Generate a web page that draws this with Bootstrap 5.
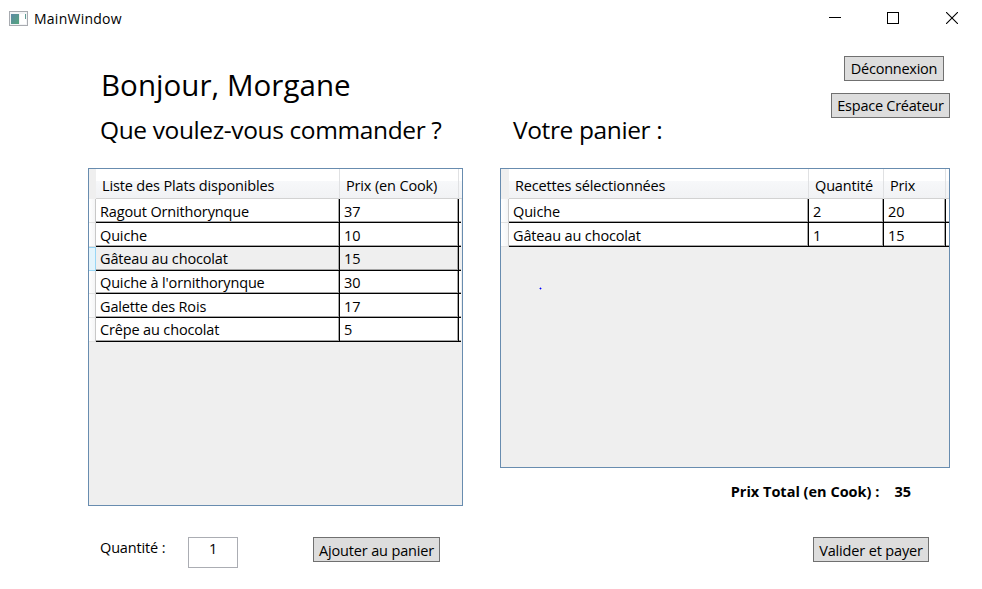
<!DOCTYPE html>
<html lang="fr">
<head>
<meta charset="utf-8">
<meta name="viewport" content="width=device-width, initial-scale=1">
<title>MainWindow</title>
<link rel="stylesheet" href="https://cdn.jsdelivr.net/npm/bootstrap@5.3.0/dist/css/bootstrap.min.css">
<style>
body{font-family:"Open Sans","Noto Sans",sans-serif;font-size:14.5px;line-height:20px;letter-spacing:-.15px;color:#000;background:#fff;height:589px;overflow:hidden}
.titlebar{height:37px;padding-left:9px}
.win-title{font-size:14px;margin-left:6px;letter-spacing:.25px}
.win-btns{margin:-3px 1px 0 0}
.win-btn{width:58.5px}
.pane-left{width:375px;margin-left:88px}
.pane-right{width:450px;margin-left:37px}
.pane-head{height:131px}
.hello{font-size:29.5px;line-height:40px;margin:28px 0 0 13px;letter-spacing:.05px}
.sub{font-size:24.5px;line-height:34px;margin:8px 0 0 12px;letter-spacing:-.38px}
.sub-cart{margin:76px 0 0 13px}
.wpf-btn{height:25px;line-height:24px;border:1px solid #707070;background:#ddd;white-space:nowrap;padding:0;color:#000;font:inherit;letter-spacing:-.25px}
.w-deco{width:100px;margin:19px 6px 0 0}
.w-esp{width:119px;margin-top:12px;padding-top:1px}
.w-add{width:127px;margin-left:75px;padding-top:2px;letter-spacing:-.15px}
.w-pay{width:116px;margin-right:21px;padding-top:2px;letter-spacing:-.15px}
.dgrid{border:1px solid #688caf;background:#efefef}
.dgrid-left{height:338px}
.dgrid-right{height:300px}
.g-row{display:grid;height:24px;background:#fff}
.g-left .g-row,.g-left .g-head{grid-template-columns:7px 244px 119px 1fr;width:372px}
.g-left .g-head{width:373px}
.g-right .g-row,.g-right .g-head{grid-template-columns:8px 300px 75px 62px 1fr;width:448px}
.g-head{display:grid;height:30px;background:linear-gradient(#fff 0 40%,#f7f8fa 40%,#f1f2f4 100%);border-bottom:1px solid #d2d2d2}
.g-head>div{border-right:1px solid #e0e1e3;padding:7px 0 0 6px;line-height:20px;white-space:nowrap}
.g-head>div:last-child{border-right:0;padding:0}
.g-head>div:first-child{background:#efefef;border-right:0;padding:0;height:30px}
.g-row>div{border-bottom:1px solid #000;border-right:1px solid #000;box-shadow:inset -1px -1px #a5a5a5;padding:3px 0 0 4px;line-height:19px;white-space:nowrap}
.g-row.up>div{padding-top:2px}
.g-row>div:last-child{border-right:0;padding:0;box-shadow:inset 0 -1px #a5a5a5}
.g-row>.rh{border-bottom:1px solid #e2e2e2;border-right:1px solid #c8c8c8;box-shadow:none;padding:0;background:linear-gradient(90deg,#fff,#f4f5f6)}
.g-row.short{height:23px}
.g-row.hover{background:#efefef}
.g-row.hover>.rh{background:#e3f4fc;border:1px solid #98d6f5;border-left:0}
.ink-dot{width:3px;height:3px;margin:40px 0 0 38px}
.total{font-weight:700;letter-spacing:0;margin:14px 39px 0 0}
.total-val{margin-left:15px}
.qty-lbl{margin:1px 0 0 12px;width:88px}
.qty{width:50px;height:31px;border:1px solid #abadb3;line-height:22px}
.pane-foot{margin-top:31px}
.pane-foot-r{margin-top:35px}
</style>
<script src="https://cdn.jsdelivr.net/npm/bootstrap@5.3.0/dist/js/bootstrap.bundle.min.js"></script>
</head>
<body>
<header class="titlebar d-flex align-items-center">
  <svg width="19" height="16" viewBox="0 0 19 16" shape-rendering="crispEdges"><defs><linearGradient id="scr" x2="1" y2="1"><stop stop-color="#5b88a5"/><stop offset="1" stop-color="#54a57c"/></linearGradient></defs><path fill="#a8abb0" d="M0 0h19v15H0z"/><path fill="#f3f4f6" d="M1 1h17v13H1z"/><path fill="url(#scr)" d="M2 3h8v10H2z"/><path fill="#fff" d="M11 3h6v10h-6z"/><path fill="#5f9c95" d="M16 3h1v5h-1z"/></svg>
  <span class="win-title">MainWindow</span>
  <div class="win-btns ms-auto d-flex">
    <div class="win-btn text-center"><svg width="12" height="12" shape-rendering="crispEdges"><path d="M0 5.5h12" stroke="#000"/></svg></div>
    <div class="win-btn text-center"><svg width="12" height="12" shape-rendering="crispEdges"><path d="M.5.5h11v11H.5z" fill="none" stroke="#000"/></svg></div>
    <div class="win-btn text-center"><svg width="12" height="12"><path d="M0 0l12 12M12 0L0 12" stroke="#000" stroke-width="1.1"/></svg></div>
  </div>
</header>
<main class="d-flex">
  <section class="pane-left">
    <div class="pane-head overflow-hidden">
      <h1 class="hello fw-normal text-nowrap">Bonjour, Morgane</h1>
      <h2 class="sub fw-normal text-nowrap">Que voulez-vous commander ?</h2>
    </div>
    <div class="dgrid dgrid-left g-left">
      <div class="g-head"><div></div><div>Liste des Plats disponibles</div><div>Prix (en Cook)</div><div></div></div>
      <div class="g-row"><div class="rh"></div><div>Ragout Ornithorynque</div><div>37</div><div></div></div>
      <div class="g-row"><div class="rh"></div><div>Quiche</div><div>10</div><div></div></div>
      <div class="g-row up hover"><div class="rh"></div><div>Gâteau au chocolat</div><div>15</div><div></div></div>
      <div class="g-row up short"><div class="rh"></div><div>Quiche à l'ornithorynque</div><div>30</div><div></div></div>
      <div class="g-row"><div class="rh"></div><div>Galette des Rois</div><div>17</div><div></div></div>
      <div class="g-row up"><div class="rh"></div><div>Crêpe au chocolat</div><div>5</div><div></div></div>
    </div>
    <div class="pane-foot d-flex align-items-start">
      <label class="qty-lbl">Quantité :</label>
      <div class="qty text-center">1</div>
      <button class="wpf-btn w-add">Ajouter au panier</button>
    </div>
  </section>
  <section class="pane-right">
    <div class="pane-head d-flex justify-content-between">
      <h2 class="sub sub-cart fw-normal text-nowrap">Votre panier :</h2>
      <div class="d-flex flex-column align-items-end">
        <button class="wpf-btn w-deco">Déconnexion</button>
        <button class="wpf-btn w-esp">Espace Créateur</button>
      </div>
    </div>
    <div class="dgrid dgrid-right g-right">
      <div class="g-head"><div></div><div>Recettes sélectionnées</div><div>Quantité</div><div>Prix</div><div></div></div>
      <div class="g-row"><div class="rh"></div><div>Quiche</div><div>2</div><div>20</div><div></div></div>
      <div class="g-row"><div class="rh"></div><div>Gâteau au chocolat</div><div>1</div><div>15</div><div></div></div>
      <svg class="ink-dot d-block" viewBox="0 0 3 3"><path d="M0 1h3v1H0zM1 0h1v3H1z" fill="#8f8ff5"/><path d="M1 1h1v1H1z" fill="#00f"/></svg>
    </div>
    <div class="total d-flex justify-content-end"><span>Prix Total (en Cook) :</span><span class="total-val">35</span></div>
    <div class="pane-foot-r d-flex justify-content-end"><button class="wpf-btn w-pay">Valider et payer</button></div>
  </section>
</main>
</body>
</html>
